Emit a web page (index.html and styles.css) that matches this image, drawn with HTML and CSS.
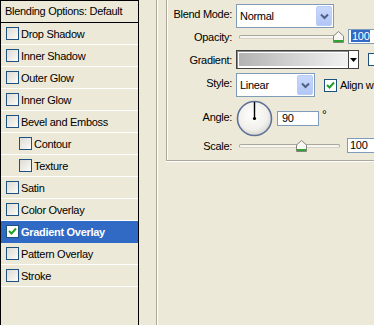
FILE: index.html
```html
<!DOCTYPE html>
<html lang="en">
<head>
  <meta charset="UTF-8">
  <title>Layer Style - Gradient Overlay</title>
  <link rel="stylesheet" href="styles.css">
</head>
<body>
  <div class="window">

    <aside class="styles-list">
      <div class="list-head">Blending Options: Default</div>
      <div class="item"><span class="check"></span>Drop Shadow</div>
      <div class="item"><span class="check"></span>Inner Shadow</div>
      <div class="item"><span class="check"></span>Outer Glow</div>
      <div class="item"><span class="check"></span>Inner Glow</div>
      <div class="item"><span class="check"></span>Bevel and Emboss</div>
      <div class="item sub"><span class="check"></span>Contour</div>
      <div class="item sub"><span class="check"></span>Texture</div>
      <div class="item"><span class="check"></span>Satin</div>
      <div class="item"><span class="check"></span>Color Overlay</div>
      <div class="item selected">
        <span class="check on">
          <svg width="11" height="11" viewBox="0 0 11 11"><path d="M2 5 L4.5 7.5 L9 2.5" fill="none" stroke="#21a121" stroke-width="2"/></svg>
        </span>Gradient Overlay
      </div>
      <div class="item"><span class="check"></span>Pattern Overlay</div>
      <div class="item"><span class="check"></span>Stroke</div>
    </aside>

    <main class="settings">
      <div class="group">

        <div class="row row-blend">
          <label class="lbl">Blend Mode:</label>
          <div class="select select-blend">
            <span class="select-text">Normal</span>
            <span class="select-btn">
              <svg width="9" height="7" viewBox="0 0 9 7"><path d="M1 1.5 L4.5 5 L8 1.5" fill="none" stroke="#4d6185" stroke-width="2"/></svg>
            </span>
          </div>
        </div>

        <div class="row row-opacity">
          <label class="lbl">Opacity:</label>
          <div class="slider slider-opacity">
            <div class="track"></div>
            <svg class="thumb" style="left: 97px" width="11" height="12" viewBox="0 0 11 12"><path d="M0.5 5 L5.5 0.5 L10.5 5 V11.5 H0.5 Z" fill="#f7f7f3" stroke="#85847e"/><rect x="1" y="9" width="9" height="2" fill="#2ea52e"/></svg>
          </div>
          <div class="field field-num"><span class="sel-text">100</span></div>
        </div>

        <div class="row row-gradient">
          <label class="lbl">Gradient:</label>
          <div class="gradient-pick">
            <span class="gradient-fill"></span>
            <span class="gradient-arrow">
              <svg width="7" height="4" viewBox="0 0 7 4"><path d="M0 0 H7 L3.5 4 Z" fill="#000"/></svg>
            </span>
          </div>
          <span class="check reverse"></span>
        </div>

        <div class="row row-style">
          <label class="lbl">Style:</label>
          <div class="select select-style">
            <span class="select-text">Linear</span>
            <span class="select-btn">
              <svg width="9" height="7" viewBox="0 0 9 7"><path d="M1 1.5 L4.5 5 L8 1.5" fill="none" stroke="#4d6185" stroke-width="2"/></svg>
            </span>
          </div>
          <span class="check on align">
            <svg width="11" height="11" viewBox="0 0 11 11"><path d="M2 5 L4.5 7.5 L9 2.5" fill="none" stroke="#21a121" stroke-width="2"/></svg>
          </span>
          <span class="align-text">Align with Layer</span>
        </div>

        <div class="row row-angle">
          <label class="lbl">Angle:</label>
          <svg class="dial" width="37" height="37" viewBox="0 0 37 37">
            <defs>
              <radialGradient id="dialFill" cx="0.45" cy="0.4" r="0.6">
                <stop offset="0" stop-color="#ffffff"/>
                <stop offset="0.7" stop-color="#f1f0ec"/>
                <stop offset="1" stop-color="#d9d8d2"/>
              </radialGradient>
            </defs>
            <circle cx="18.5" cy="18.5" r="17" fill="url(#dialFill)" stroke="#5f7199" stroke-width="1.6"/>
            <line x1="18.5" y1="18.5" x2="18.5" y2="2" stroke="#000" stroke-width="1.4"/>
            <circle cx="18.5" cy="18.5" r="1.6" fill="#000"/>
          </svg>
          <div class="field field-angle">90</div>
          <span class="deg">°</span>
        </div>

        <div class="row row-scale">
          <label class="lbl">Scale:</label>
          <div class="slider slider-scale">
            <div class="track"></div>
            <svg class="thumb" style="left: 60px" width="11" height="12" viewBox="0 0 11 12"><path d="M0.5 5 L5.5 0.5 L10.5 5 V11.5 H0.5 Z" fill="#f7f7f3" stroke="#85847e"/><rect x="1" y="9" width="9" height="2" fill="#2ea52e"/></svg>
          </div>
          <div class="field field-num">100</div>
        </div>

      </div>
    </main>

  </div>
</body>
</html>
```

FILE: styles.css
```css
body {
  margin: 0;
  font-family: "Liberation Sans", Arial, sans-serif;
  font-size: 11px;
  letter-spacing: -0.3px;
  color: #000;
  background: #ece9d8;
  overflow: hidden;
}

.window {
  display: flex;
  height: 325px;
}

/* left: list of layer styles */
.styles-list {
  width: 139px;
  flex: none;
  box-sizing: border-box;
  border: 1px solid #000;
  border-bottom: none;
  background: #ece9d8;
}
.list-head {
  height: 21px;
  line-height: 21px;
  padding-left: 4px;
  border-bottom: 1px solid #000;
}
.item {
  display: flex;
  align-items: center;
  height: 21px;
  padding-left: 5px;
  border-bottom: 1px solid #fff;
}
.item.sub { padding-left: 18px; }
.item.selected {
  background: #316ac5;
  border-bottom-color: #316ac5;
  color: #fff;
  font-weight: bold;
}

.check {
  display: inline-flex;
  align-items: center;
  justify-content: center;
  width: 13px;
  height: 13px;
  box-sizing: border-box;
  margin-right: 2px;
  border: 1px solid #1c5180;
  background: linear-gradient(135deg, #dcdbd5 0%, #f2f1ec 70%, #fff 100%);
  flex: none;
}
.check.on { background: #fff; }

/* right: settings panel */
.settings {
  flex: 1;
  margin-left: 17px;
  border-left: 1px solid #aca899;
  box-shadow: inset 1px 0 #fff;
  padding-left: 9px;
  overflow: hidden;
}
.group {
  width: 260px;
  height: 161px;
  box-sizing: border-box;
  border-left: 1px solid #aca899;
  border-bottom: 1px solid #aca899;
  box-shadow: inset 1px 0 #fff, 0 1px #fff;
  padding: 4px 0 0 1px;
}

.row {
  display: flex;
  align-items: center;
}
.lbl {
  width: 64px;
  margin-right: 4px;
  text-align: right;
  flex: none;
}
.row-blend { height: 24px; }
.row-blend .lbl { padding-bottom: 4px; }
.row-opacity { height: 15px; margin-top: 1px; }
.row-gradient { height: 19px; margin-top: 6px; }
.row-style { height: 24px; margin-top: 4px; }
.row-style .lbl { padding-bottom: 4px; }
.row-angle { height: 37px; margin-top: 3px; }
.row-angle .lbl { padding-bottom: 4px; }
.row-scale { height: 15px; margin-top: 1px; }

/* combo boxes */
.select {
  display: flex;
  align-items: center;
  justify-content: space-between;
  height: 24px;
  box-sizing: border-box;
  border: 1px solid #7f9db9;
  background: #fff;
  padding: 1px;
}
.select-blend { width: 98px; }
.select-style { width: 79px; }
.select-text { padding-left: 2px; }
.select-btn {
  display: flex;
  align-items: center;
  justify-content: center;
  width: 16px;
  height: 20px;
  box-sizing: border-box;
  border: 1px solid #b9cdf7;
  border-radius: 2px;
  background: linear-gradient(#c9d8fc, #b2c6f6);
}

/* sliders */
.slider {
  position: relative;
  height: 15px;
  display: flex;
  align-items: center;
  margin-right: 4px;
}
.slider-opacity { width: 108px; }
.slider-scale { width: 107px; }
.track {
  flex: 1;
  height: 4px;
  margin: 0 3px;
  box-sizing: border-box;
  border: 1px solid #a9a69c;
  border-bottom-color: #d6d3c6;
  border-radius: 2px;
  background: #f7f6f1;
}
.thumb {
  position: absolute;
  top: 2px;
}

/* text fields */
.field {
  height: 15px;
  line-height: 13px;
  box-sizing: border-box;
  border: 1px solid #7f9db9;
  background: #fff;
  padding-left: 2px;
  flex: none;
}
.field-num { width: 40px; }
.field-angle { width: 42px; margin-left: 4px; padding-left: 4px; }
.sel-text {
  background: #316ac5;
  color: #fff;
  padding: 0 1px;
}
.deg {
  align-self: flex-start;
  margin: 8px 0 0 3px;
  font-size: 12px;
}

/* gradient picker */
.gradient-pick {
  display: flex;
  width: 123px;
  height: 19px;
  box-sizing: border-box;
  border: 1px solid #404040;
  box-shadow: inset 1px 1px #8d8d8d;
  background: #fff;
}
.gradient-fill {
  flex: 1;
  margin: 2px 0 2px 2px;
  background: linear-gradient(to right, #b3b3b3, #f2f2f2);
}
.gradient-arrow {
  display: flex;
  align-items: center;
  justify-content: center;
  width: 9px;
  border-left: 1px solid #404040;
  background: #fff;
}
.check.reverse {
  margin-left: 9px;
  background: #fff;
}

.check.align { margin-left: 9px; }
.align-text {
  margin-left: 1px;
  white-space: nowrap;
}
.dial { flex: none; }
```
